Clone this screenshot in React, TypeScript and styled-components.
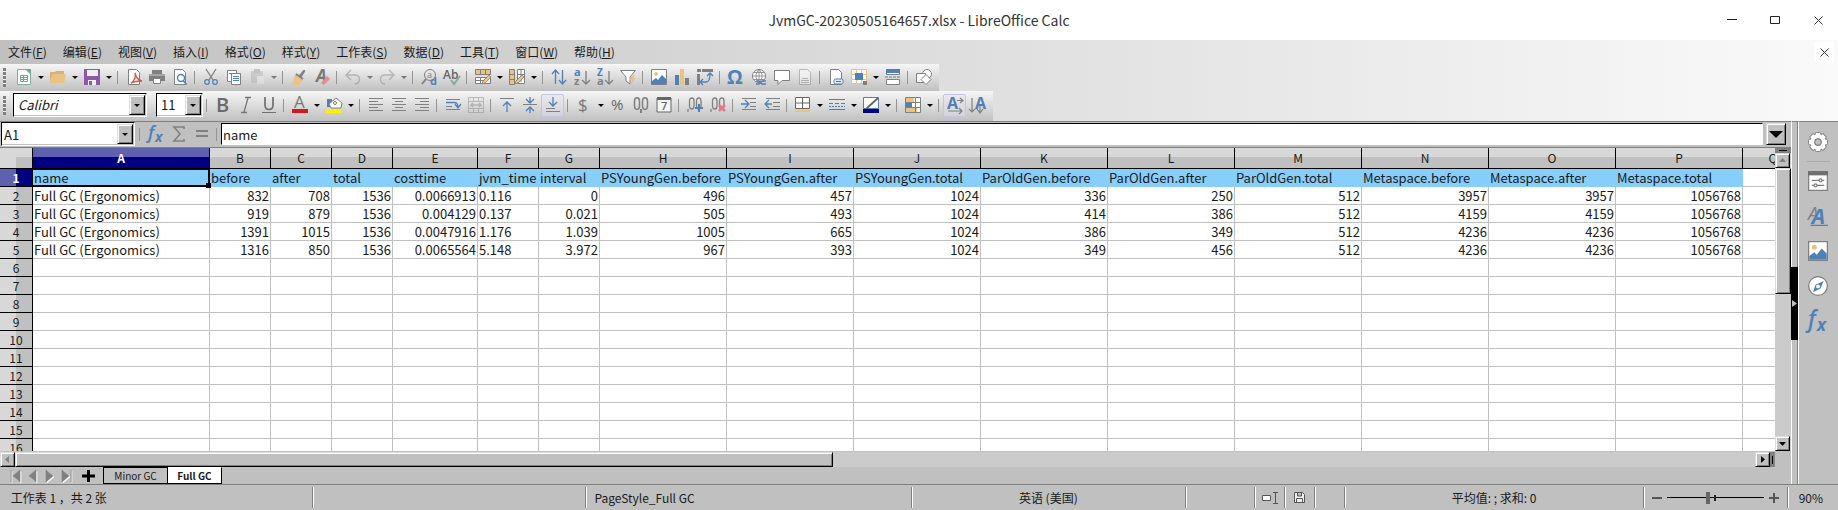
import React from 'react';
import styled, { createGlobalStyle, css } from 'styled-components';

const GREY = '#808080';
const BLUE = '#4d82b8';
const PEACH = '#eac282';
const FONT = '"Noto Sans CJK SC", "Noto Sans", sans-serif';

const Global = createGlobalStyle`
  *, *::before, *::after { box-sizing: border-box; }
  body { margin: 0; background: #c0c0c0; font-family: ${FONT}; color: #1a1a1a; }
  button, input, select { font: inherit; color: inherit; border-radius: 0; }
`;

const raised = css`
  background: #c0c0c0;
  border: 1px solid;
  border-color: #dcdcdc #000 #000 #dcdcdc;
  box-shadow: inset 1px 1px #fff, inset -1px -1px #808080;
`;

/* ---------- window frame ---------- */

const Window = styled.div`
  display: flex;
  flex-direction: column;
  height: 100vh;
  overflow: hidden;
  background: #c0c0c0;
  font-size: 13px;
`;

const TitleBar = styled.header`
  display: grid;
  grid-template-columns: 1fr auto 1fr;
  align-items: center;
  flex: none;
  height: 40px;
  background: #fff;
`;

const Title = styled.h1`
  grid-column: 2;
  margin: 0;
  font-size: 14px;
  line-height: 24px;
  font-weight: 400;
  color: #333;
`;

const WindowButtons = styled.div`
  display: flex;
  justify-content: flex-end;
  gap: 23px;
  padding-right: 10px;
`;

const PlainButton = styled.button`
  display: flex;
  align-items: center;
  justify-content: center;
  width: 20px;
  height: 20px;
  padding: 0;
  border: 0;
  background: transparent;
`;

const Commands = styled.div`
  flex: none;
  background: linear-gradient(90deg, #c0c0c0, #fafafa);
`;

const MenuBar = styled.nav`
  display: flex;
  align-items: center;
  gap: 16px;
  height: 24px;
  padding: 0 4px 0 8px;
`;

const MenuItem = styled.button`
  padding: 0;
  border: 0;
  background: transparent;
  font-size: 12px;
  line-height: 20px;
  white-space: nowrap;
`;

const DocClose = styled(PlainButton)`
  margin-left: auto;
  background: #fff;
`;

const Toolbar = styled.div<{ $tall?: boolean }>`
  display: flex;
  align-items: center;
  width: fit-content;
  height: ${p => (p.$tall ? 30 : 27)}px;
  padding: 0 4px ${p => (p.$tall ? 2 : 1)}px 3px;
  background: linear-gradient(#f6f6f6, #c0c0c0);
`;

const Grip = styled.span`
  width: 3px;
  height: 19px;
  margin-right: 6px;
  background: repeating-linear-gradient(#808080 0 3px, #f0f0f0 3px 4px);
`;

const Separator = styled.span`
  width: 8px;
  height: 13px;
  padding-left: 3px;
  &::before { content: ''; display: block; width: 1px; height: 100%; background: #949494; }
`;

const ToolButton = styled.button<{ $menu?: boolean; $on?: boolean; $dim?: boolean }>`
  display: flex;
  align-items: center;
  gap: 6px;
  width: ${p => (p.$menu ? 34 : 23)}px;
  height: 23px;
  padding: 0 0 0 ${p => (p.$on ? 3 : 4)}px;
  border: ${p => (p.$on ? '1px solid #c4c4e4' : '0')};
  border-radius: 2px;
  background: ${p => (p.$on ? 'rgba(225, 225, 240, 0.4)' : 'transparent')};
  opacity: ${p => (p.$dim ? 0.45 : 1)};
`;

const Svg = styled.svg`
  display: block;
  flex: none;
  overflow: visible;
`;

const Arrow = styled.span`
  border: 3px solid transparent;
  border-top-color: #000;
  border-bottom-width: 0;
`;

/* ---------- combo boxes ---------- */

const Combo = styled.div<{ $kind: 'font' | 'size' | 'name' }>`
  display: flex;
  flex: none;
  width: ${p => ({ font: 134, size: 47, name: 134 })[p.$kind]}px;
  height: 24px;
  padding: 1px;
  background: #fff;
  border: 1px solid;
  border-color: #000 #fff #fff #000;
  box-shadow: inset -1px -1px #c0c0c0;
`;

const Select = styled.select<{ $italic?: boolean }>`
  flex: 1;
  min-width: 0;
  padding: 0 0 0 3px;
  border: 0;
  appearance: none;
  background: transparent;
  font-size: 13px;
  line-height: 20px;
  font-style: ${p => (p.$italic ? 'italic' : 'normal')};
`;

const NameInput = styled.input`
  flex: 1;
  min-width: 0;
  padding: 0 0 0 1px;
  border: 0;
  background: transparent;
  font-size: 13px;
`;

const ComboButton = styled.button`
  display: flex;
  align-items: center;
  justify-content: center;
  flex: none;
  width: 16px;
  padding: 0;
  ${raised}
`;

const FontBoxes = styled.div`
  display: flex;
  gap: 9px;
  padding-left: 1px;
`;

/* ---------- body ---------- */

const Body = styled.div`
  display: flex;
  flex: 1;
  min-height: 0;
`;

const Main = styled.main`
  display: flex;
  flex-direction: column;
  flex: 1;
  min-width: 0;
  border-top: 1px solid #808080;
`;

const FormulaBar = styled.div`
  display: flex;
  align-items: center;
  flex: none;
  height: 26px;
  padding: 0 5px 1px 1px;
  border-bottom: 1px solid #808080;
`;

const FormulaTools = styled.div`
  display: flex;
  align-items: center;
  padding-left: 1px;
`;

const FormulaInput = styled.input`
  flex: 1;
  min-width: 0;
  height: 22px;
  margin: 0 3px 0 0;
  padding: 0 1px;
  border: 1px solid;
  border-color: #000 #fff #fff #000;
  background: #fff;
  font-size: 13px;
`;

const ExpandButton = styled.button`
  display: flex;
  align-items: center;
  justify-content: center;
  width: 20px;
  height: 22px;
  padding: 0;
  ${raised}
`;

const BigArrow = styled.span`
  border: 7px solid transparent;
  border-top-color: #000;
  border-bottom-width: 0;
`;

const SheetArea = styled.div`
  display: grid;
  grid-template-columns: minmax(0, 1fr) 16px;
  grid-template-rows: minmax(0, 1fr) 16px;
  flex: 1;
  min-height: 0;
`;

const Grid = styled.div`
  overflow: hidden;
  background: #fff;
`;

const Table = styled.table`
  width: 100%;
  min-width: 1804px;
  table-layout: fixed;
  border-collapse: separate;
  border-spacing: 0;
  font-size: 13px;
`;

const Col = styled.col<{ $w?: number }>`
  width: ${p => (p.$w ? `${p.$w}px` : 'auto')};
`;

const Corner = styled.td`
  height: 21px;
  padding: 0;
  border-right: 1px solid #000;
  border-bottom: 1px solid #000;
  background: linear-gradient(#c0c0c0, #c0c0c0) right bottom / 16px 11px no-repeat #d8d8d8;
`;

const ColHead = styled.th<{ $sel?: boolean }>`
  height: 21px;
  padding: 0;
  overflow: hidden;
  border-right: 1px solid #000;
  border-bottom: 1px solid #000;
  background: ${p => (p.$sel
    ? 'linear-gradient(#6060b0 0 9px, #000080 9px)'
    : 'linear-gradient(#d8d8d8 0 9px, #c0c0c0 9px)')};
  color: ${p => (p.$sel ? '#fff' : '#1a1a1a')};
  font-size: 12px;
  line-height: 20px;
  font-weight: ${p => (p.$sel ? 700 : 400)};
`;

const RowHead = styled.th<{ $sel?: boolean }>`
  height: 18px;
  padding: 0;
  border-right: 1px solid #000;
  border-bottom: 1px solid #000;
  background: ${p => (p.$sel
    ? 'linear-gradient(90deg, #6060b0 0 16px, #000080 16px)'
    : 'linear-gradient(90deg, #d8d8d8 0 16px, #c0c0c0 16px)')};
  color: ${p => (p.$sel ? '#fff' : '#1a1a1a')};
  font-size: 12px;
  line-height: 17px;
  font-weight: ${p => (p.$sel ? 700 : 400)};
`;

const Cell = styled.td<{ $head?: boolean; $right?: boolean }>`
  position: relative;
  height: 18px;
  padding: 0 1px;
  border-right: 1px solid ${p => (p.$head ? '#87cefa' : '#c0c0c0')};
  border-bottom: 1px solid ${p => (p.$head ? '#87cefa' : '#c0c0c0')};
  background: ${p => (p.$head ? '#87cefa' : '#fff')};
  line-height: 17px;
  text-align: ${p => (p.$right ? 'right' : 'left')};
  white-space: nowrap;
`;

const Cursor = styled.span`
  position: absolute;
  inset: 0 -1px -1px -1px;
  z-index: 1;
  border: 1px solid #000;
  border-right-width: 2px;
  border-bottom-width: 2px;
  &::after {
    content: '';
    position: absolute;
    right: -3px;
    bottom: -3px;
    width: 5px;
    height: 5px;
    background: #000;
  }
`;

/* ---------- scroll bars ---------- */

const VScroll = styled.div`
  display: flex;
  flex-direction: column;
  background: #cbcbcb;
`;

const VSplit = styled.div`
  flex: none;
  height: 5px;
  padding: 2px 4px;
  background: #808080;
  &::before { content: ''; display: block; height: 1px; background: #000; }
`;

const ScrollButton = styled.button`
  display: flex;
  align-items: center;
  justify-content: center;
  flex: none;
  width: 15px;
  height: 15px;
  padding: 0;
  ${raised}
`;

const VTrack = styled.div`
  flex: 1;
  min-height: 0;
`;

const VThumb = styled.div`
  height: 47%;
  ${raised}
`;

const HScroll = styled.div`
  display: flex;
  border-top: 1px solid #c0c0c0;
  background: #cbcbcb;
`;

const HTrack = styled.div`
  flex: 1;
`;

const HThumb = styled.div`
  width: 47%;
  height: 15px;
  ${raised}
`;

const HSplit = styled.div`
  width: 5px;
  padding: 4px 2px;
  background: #808080;
  &::before { content: ''; display: block; width: 1px; height: 8px; background: #000; }
`;

/* ---------- sheet tabs ---------- */

const TabBar = styled.div`
  display: flex;
  flex: none;
  align-items: flex-start;
  height: 17px;
`;

const TabNav = styled.div`
  display: flex;
  align-items: center;
  width: 103px;
  height: 17px;
  padding-left: 7px;
`;

const NavButton = styled(PlainButton)`
  width: 17px;
  height: 16px;
`;

const AddButton = styled(PlainButton)`
  width: 20px;
  height: 16px;
  margin-left: 3px;
`;

const Tab = styled.button<{ $active?: boolean }>`
  width: ${p => (p.$active ? 54 : 65)}px;
  height: 17px;
  padding: 0;
  border: 1px solid #000;
  border-left-width: ${p => (p.$active ? 0 : 1)}px;
  border-top-color: ${p => (p.$active ? '#fff' : '#000')};
  background: ${p => (p.$active ? '#fff' : '#c0c0c0')};
  font-size: 10px;
  line-height: 15px;
  font-weight: ${p => (p.$active ? 700 : 400)};
`;

/* ---------- side bar ---------- */

const Splitter = styled.div`
  display: flex;
  flex-direction: column;
  justify-content: center;
  flex: none;
  width: 7px;
  border-top: 1px solid #808080;
  border-left: 1px solid #fff;
  border-right: 1px solid #808080;
  background: #c0c0c0;
`;

const SplitHandle = styled.button`
  display: flex;
  align-items: center;
  justify-content: center;
  width: 7px;
  height: 73px;
  margin-left: -1px;
  padding: 0;
  border: 0;
  background: #000;
`;

const Sidebar = styled.aside`
  display: flex;
  flex-direction: column;
  align-items: center;
  gap: 15px;
  flex: none;
  width: 40px;
  padding: 10px 1px 0 0;
  border-top: 1px solid #808080;
  border-left: 1px solid #fff;
`;

const SettingsSlot = styled.div`
  display: flex;
  flex-direction: column;
  align-items: center;
  gap: 9px;
  width: 24px;
  height: 24px;
`;

const SideRule = styled.hr`
  flex: none;
  width: 23px;
  height: 1px;
  margin: 0;
  border: 0;
  background: #a8a8a8;
`;

/* ---------- status bar ---------- */

const StatusBar = styled.footer`
  display: flex;
  align-items: center;
  flex: none;
  height: 26px;
  border-top: 1px solid #808080;
  font-size: 12px;
`;

const StatusCell = styled.div<{ $grow?: number; $w?: number; $center?: boolean; $last?: boolean }>`
  display: flex;
  align-items: center;
  justify-content: ${p => (p.$center ? 'center' : 'flex-start')};
  flex: ${p => (p.$grow ? `${p.$grow} 1 0` : `0 0 ${p.$w}px`)};
  min-width: 0;
  height: 21px;
  padding: 0 ${p => (p.$w === 30 ? 0 : 8)}px;
  border-right: ${p => (p.$last ? '0' : '1px solid #808080')};
  box-shadow: ${p => (p.$last ? 'none' : '1px 0 #fff')};
  white-space: nowrap;
`;

const Slider = styled.input`
  flex: 1;
  width: 0;
  min-width: 0;
  height: 12px;
  margin: 0 5px;
  appearance: none;
  background: linear-gradient(#222, #222) 49% 50% / 2px 6px no-repeat,
    linear-gradient(#000, #000) center / 100% 1px no-repeat;
  &::-webkit-slider-thumb {
    appearance: none;
    width: 4px;
    height: 12px;
    background: #666;
  }
`;

/* ---------- drawings ---------- */

const s = { fill: 'none', stroke: GREY, strokeWidth: 1 };
const b = { fill: 'none', stroke: BLUE, strokeWidth: 1.3 };
const sheet = <path d="M2.5.5h8l3 3v12h-11z" fill="#fff" stroke={GREY} />;
const glyph = (x: number, y: number, size: number, text: string, fill: string, weight = 400) => (
  <text x={x} y={y} fontSize={size} fill={fill} fontWeight={weight} fontFamily="Open Sans, sans-serif">{text}</text>
);
const lines = (rows: [number, number, number][], c = GREY) =>
  rows.map(([x, y, w]) => <rect key={y} x={x} y={y} width={w} height={1} fill={c} />);

const icons: Record<string, React.ReactNode> = {
  new: (<><path d="M1.500 .5h9l4 4v11h-13z" fill="#fff" stroke="#7fae9c" /><path d="M9 0h6v6z" fill="#6fa890" /><path d="M4.500 6.500h7v6h-7zM4.500 8.500h7M4.500 10.500h7M7.500 6.500v6" fill="none" stroke="#6fa890" /></>),
  open: (<><path d="M0 13V3h5l1-1h8v3H3z" fill="#d9b27a" /><path d="M3 5h13l-2 9H0z" fill={PEACH} /></>),
  save: (<><path d="M0 0h16v16H0z" fill="#8c5aa8" /><path d="M3 1h11v6H3zM4 11h8v5H4z" fill="#eee" /><path d="M5 12h3v4H5z" fill="#8c5aa8" /></>),
  pdf: (<>{sheet}<path d="M5 14c3-2 5-6 4-10 1 5 3 7 7 8-4 0-7 0-11 2z" fill="none" stroke="#d05a4a" strokeWidth="1.4" /></>),
  print: (<><path d="M3 1h10v4H3z" fill={GREY} /><path d="M0 5h16v7H0z" fill={GREY} /><path d="M4.500 9.500h7v5h-7z" fill="#fff" stroke={GREY} /><path d="M0 6h16" stroke="#ccc" /></>),
  preview: (<>{sheet}<circle cx="9" cy="9" r="3.500" fill="#fff" stroke={BLUE} strokeWidth="1.400" /><path d="M11.500 12l3 3.500" stroke={BLUE} strokeWidth="1.600" /></>),
  cut: (<><path d="M3 0l7 11M13 0L6 11" {...s} strokeWidth="1.300" /><circle cx="4" cy="13" r="2.300" {...b} /><circle cx="12" cy="13" r="2.300" {...b} /></>),
  copy: (<><path d="M1.500 1.500h9v11h-9z" fill="#fff" stroke={GREY} /><path d="M5.500 4.500h9v11h-9z" fill="#fff" stroke={GREY} />{lines([[7, 7, 6], [7, 9, 6], [7, 11, 6], [3, 4, 6]], BLUE)}</>),
  paste: (<><path d="M2 2h12v12H2z" fill="#b0b0b0" /><path d="M5 0h6v4H5z" fill="#999" /><path d="M8 7h7v8H8z" fill="#e8e8e8" /></>),
  brush: (<><path d="M8 7l5-6 1 1-4 6z" fill={GREY} stroke={GREY} /><path d="M4 5l8 6-4 5H1c2-4 2-7 3-11z" fill={PEACH} /><path d="M5 5l7 5" stroke={GREY} strokeWidth="2" /></>),
  clear: (<><g fontStyle="italic">{glyph(2, 13, 17, 'A', '#777', 700)}</g><path d="M7 14l6-7 3 3-6 6z" fill="#e58a9a" /></>),
  undo: (<path d="M6 1L1 6l5 5M1 6h9c6 0 6 8 0 9" {...s} strokeWidth="1.400" />),
  redo: (<path d="M10 1l5 5-5 5M15 6H6c-6 0-6 8 0 9" {...s} strokeWidth="1.400" />),
  find: (<><circle cx="9" cy="6" r="5.500" {...s} />{glyph(6, 9, 9, 'a', GREY)}<path d="M5 10l-4 5" stroke={GREY} strokeWidth="2" />{glyph(9, 16, 11, 'd', BLUE, 700)}</>),
  spell: (<>{glyph(-1, 10, 12, 'Ab', '#666', 600)}<path d="M7 11l3 4 6-8" fill="none" stroke="#7fae9c" strokeWidth="2" /></>),
  row: (<><path d="M.5.500h15v5H.5z" fill={PEACH} stroke={GREY} /><path d="M5.500 1v4M10.500 1v4" {...s} /><path d="M.5 8.500h15v6H.5zM5.500 9v5M0 11.500h10" fill="#fff" stroke={GREY} /><path d="M8 12l6-6 2 2-6 6-3 1z" fill={PEACH} stroke="#777" strokeWidth=".7" /></>),
  col: (<><path d="M.5.500h5v15h-5z" fill={PEACH} stroke={GREY} /><path d="M1 5.500h4M1 10.500h4" {...s} /><path d="M8.500.500h7v14h-7zM9 5.500h6M12 1v12" fill="#fff" stroke={GREY} /><path d="M7 12l6-6 2 2-6 6-3 1z" fill={PEACH} stroke="#777" strokeWidth=".7" /></>),
  sort: (<><path d="M4.500 15V2M1 5l3.500-4L8 5" {...b} /><path d="M11.500 1v13M8 11l3.500 4 3.500-4" {...b} /></>),
  az: (<>{glyph(0, 7, 11, 'a', BLUE, 700)}{glyph(0, 16, 11, 'z', GREY, 700)}<path d="M12 2v13M8 11l4 4 4-4" {...s} strokeWidth="1.300" /></>),
  za: (<>{glyph(0, 7, 10, 'Z', BLUE, 700)}{glyph(0, 16, 11, 'a', GREY, 700)}<path d="M12 2v13M8 11l4 4 4-4" {...s} strokeWidth="1.300" /></>),
  filter: (<><path d="M.5 1.500h15L10 8v7l-4-3V8z" fill="#fff" stroke={GREY} /><path d="M13 6l-4 5h3l-2 5 6-7h-3l2-3z" fill={PEACH} /></>),
  image: (<><path d="M.5.500h15v15H.5z" fill="#fff" stroke={GREY} /><circle cx="5" cy="5" r="2" fill={PEACH} /><path d="M1 15v-3l4-3 2 2 4-5 4 4v5z" fill={BLUE} /></>),
  chart: (<><path d="M1 6h4v10H1z" fill={BLUE} /><path d="M6 0h4v16H6z" fill={PEACH} /><path d="M11 9h4v7h-4z" fill={GREY} /></>),
  pivot: (<><path d="M0 0h4v3H0zM5 0h11v3H5zM0 5h3v11H0z" fill={GREY} /><path d="M4 13h5c3 0 4-3 4-8M6 10l-3 3 3 3M10 7l3-3 3 3" {...b} /></>),
  omega: glyph(-1, 15, 20, 'Ω', BLUE, 700),
  link: (<><circle cx="8" cy="7" r="6.500" fill="#fff" stroke={GREY} /><path d="M8 .5v13M1.500 7h13M3 3.500h10M3 10.500h10M8 .5c-4 4-4 9 0 13M8 .5c4 4 4 9 0 13" {...s} strokeWidth=".8" /><path d="M5 12h3l3 3h4M5 15h3l3-3h4" fill="none" stroke={BLUE} strokeWidth="1.500" /></>),
  comment: <path d="M.5 1.500h15v10H8l-4 4v-4H.5z" fill="#fff" stroke={GREY} />,
  header: (<>{sheet}{lines([[5, 9, 6], [4, 11, 8], [4, 13, 8]])}</>),
  printArea: (<>{sheet}<rect x="6" y="10" width="9" height="5" rx="1.500" fill="#dde8f4" stroke={BLUE} /><path d="M8 12.500h5" stroke={BLUE} /></>),
  freeze: (<><path d="M.5.500h15v14H.5z" fill="#fff" stroke={PEACH} /><path d="M5.500 0v15M10.500 0v15M0 5.500h16M0 10.500h16" stroke={PEACH} /><path d="M12 12h4v4h-4z" fill={GREY} /><path d="M4 4h8v7H4z" fill={BLUE} /></>),
  split: (<><path d="M1.500.500h13v5h-13zM1.500 10.500h13v5h-13z" fill="#fff" stroke={GREY} /><path d="M1 0h14v4H1z" fill={BLUE} /><path d="M0 8h16" stroke={BLUE} strokeDasharray="3 1" /></>),
  shapes: (<><circle cx="11" cy="5" r="4.500" fill="#fff" stroke={GREY} /><path d="M.5 4.500h9v9h-9z" fill="#fff" stroke={GREY} /><path d="M10 5.500l5 5-5 5-5-5z" fill="#fff" stroke={GREY} /></>),
  bold: glyph(1, 15, 20, 'B', '#6a6a6a', 600),
  italic: <path d="M7 .5h6M3 15.500h6M10 1L6 15" fill="none" stroke="#777" strokeWidth="1.300" />,
  underline: (<><path d="M4 0v8c0 6 8 6 8 0V0" fill="none" stroke="#707070" strokeWidth="1.700" /><path d="M1 15.500h14" stroke="#707070" /></>),
  fontColor: (<>{glyph(2, 11, 17, 'A', '#777')}<rect y="12" width="16" height="4" fill="#d01820" /></>),
  fill: (<><path d="M1 2h5v8H1z" fill={BLUE} /><path d="M3 7l7-6 6 5-1 5H5z" fill="#fff" stroke={GREY} /><circle cx="9" cy="6" r="1.500" {...s} /><rect y="12" width="16" height="4" fill="#ffee00" /></>),
  left: lines([[1, 1, 14], [1, 4, 9], [1, 7, 14], [1, 10, 9], [1, 13, 14]]),
  center: lines([[1, 1, 14], [4, 4, 8], [1, 7, 14], [4, 10, 8], [1, 13, 14]]),
  right: lines([[1, 1, 14], [6, 4, 9], [1, 7, 14], [6, 10, 9], [1, 13, 14]]),
  wrap: (<>{lines([[1, 2, 14], [1, 9, 6], [1, 12, 14]])}<path d="M1 5.500h8c3 0 4 1 4 5M10 7l3 4 3-4" {...b} /></>),
  merge: (<><path d="M.5.500h15v4H.5zM.5 11.500h15v4H.5zM5.500 0v4M10.500 0v4M5.500 12v4M10.500 12v4M.5 4v8M15.500 4v8" {...s} /><path d="M3 8h10M5 6L3 8l2 2M11 6l2 2-2 2" {...s} strokeWidth="1.600" /></>),
  top: (<>{lines([[1, 1, 14]])}<path d="M8 15V5M4 9l4-4 4 4" {...b} /></>),
  middle: (<>{lines([[1, 7, 14]])}<path d="M8 0v5M4 2l4 4 4-4M8 16v-5M4 14l4-4 4 4" {...b} /></>),
  bottom: (<>{lines([[1, 11, 9], [1, 14, 14]])}<path d="M8 0v9M4 5l4 4 4-4" {...b} /></>),
  dollar: glyph(2, 14, 17, '$', '#777'),
  percent: glyph(1, 13, 15, '%', '#666'),
  number: (<><path d="M1.500 4c0-4.500 5-4.500 5 0v5c0 4.500-5 4.500-5 0zM9.500 4c0-4.500 5-4.500 5 0v5c0 4.500-5 4.500-5 0z" {...s} strokeWidth="1.500" /><path d="M7 12h2v4H7z" fill={GREY} /></>),
  date: (<><path d="M1 1h14v14H1z" fill="#f4f4f4" stroke="#666" /><path d="M1 0h14v3H1z" fill="#666" />{glyph(5, 13, 11, '7', '#666', 600)}</>),
  addDec: (<><path d="M2.500 4c0-4 4.500-4 4.500 0v5c0 4-4.500 4-4.500 0zM9.500 4c0-4 4.500-4 4.500 0v5c0 4-4.500 4-4.500 0zM1 12v3" {...s} strokeWidth="1.300" /><path d="M12 7v8M8 11h8" stroke={BLUE} strokeWidth="2" /></>),
  delDec: (<><path d="M2.500 4c0-4 4.500-4 4.500 0v5c0 4-4.500 4-4.500 0zM9.500 4c0-4 4.500-4 4.500 0v5c0 4-4.500 4-4.500 0zM1 12v3" {...s} strokeWidth="1.300" /><path d="M9 8l6 6M15 8l-6 6" stroke="#e5788a" strokeWidth="2.500" /></>),
  indent: (<>{lines([[1, 1, 14], [9, 5, 6], [9, 9, 6], [1, 12, 14]])}<path d="M0 7h7M4 3l4 4-4 4" {...b} /></>),
  outdent: (<>{lines([[2, 1, 14], [9, 5, 7], [9, 9, 7], [2, 12, 14]])}<path d="M8 7H1M5 3L1 7l4 4" {...b} /></>),
  border: (<><path d="M.5.500h14v11H.5zM7.500 0v12M0 6h15" fill="#fff" stroke="#666" /><rect y="13" width="15" height="2" fill={PEACH} /></>),
  lineStyle: (<>{lines([[0, 2, 16], [0, 12, 16]], BLUE)}<path d="M0 6.500h16" stroke={BLUE} strokeDasharray="4 2" /><path d="M0 9.500h16" stroke={BLUE} strokeDasharray="2 1" /></>),
  lineColor: (<><path d="M.5.500h15v11H.5z" fill="#fff" stroke={BLUE} /><path d="M3 12L15 1" stroke="#666" strokeWidth="1.800" /><rect y="12" width="16" height="4" fill="#000080" /></>),
  cond: (<><path d="M.5.500h15v15H.5z" fill="#fff" stroke={GREY} /><path d="M1 1h8v4H1zM1 11h11v4H1z" fill={PEACH} /><path d="M1 6h6v4H1z" fill={BLUE} /><path d="M0 5.500h16M0 10.500h16M10.500 0v16" {...s} /></>),
  ltr: (<>{glyph(0, 12, 16, 'A', BLUE, 700)}<path d="M10 3.500h6M13 1l3 2.500L13 6M1 14h14M12 11l3 3-3 3" {...s} strokeWidth="1.200" /></>),
  ttb: (<>{glyph(5, 12, 16, 'A', BLUE, 700)}<path d="M2 1v14M-1 12l3 3 3-3M10 9v7M7 12l3 4 3-4" {...s} strokeWidth="1.200" /></>),
  fx: (<g fontStyle="italic">{glyph(0, 13, 18, 'f', BLUE, 600)}{glyph(7, 16, 14, 'x', BLUE, 700)}</g>),
  sum: <path d="M13 3V1H3l6 7-6 7h10v-2" fill="none" stroke={GREY} strokeWidth="1.600" />,
  equals: <path d="M2 5h12M2 10h12" stroke={GREY} strokeWidth="2" />,
  gear: (
    <>
      {[0, 45, 90, 135].map(a => (
        <rect key={a} x="5.800" y=".4" width="4.400" height="15.200" rx="1" fill="#fff" stroke={GREY} strokeWidth=".8" transform={`rotate(${a} 8 8)`} />
      ))}
      <circle cx="8" cy="8" r="6.200" fill="#fff" />
      <circle cx="8" cy="8" r="2.600" fill="#c0c0c0" stroke={GREY} />
    </>
  ),
  props: (<><path d="M.5.500h15v15H.5z" fill="#fff" stroke={GREY} /><path d="M0 0h16v3.500H0z" fill="#707070" /><path d="M3 7.500h10M3 11.500h10" {...s} /><circle cx="10" cy="7.500" r="1.200" fill="#fff" stroke={GREY} /><circle cx="6" cy="11.500" r="1.200" fill="#fff" stroke={GREY} /></>),
  styles: (<><g fontStyle="italic">{glyph(0, 11, 15, 'A', GREY)}{glyph(3, 14, 17, 'A', BLUE, 700)}</g><path d="M2 15.500h14" stroke={BLUE} /></>),
  compass: (<><circle cx="8" cy="8" r="7.500" fill="#fff" stroke={GREY} /><path d="M12.500 4L10 10l-6 3 2-6z" fill={BLUE} /><circle cx="8" cy="8.300" r="1.500" fill="#fff" /></>),
};

const Icon = ({ name, size = 16 }: { name: string; size?: number }) => (
  <Svg width={size} height={size} viewBox="0 0 16 16" aria-hidden="true">{icons[name]}</Svg>
);

/* Entries: '|' is a separator, '+' opens a menu, '*' is switched on, '~' is unavailable. */
const standardTools = 'new+ open+ save+ | pdf print preview | cut copy paste+~ | brush clear | undo+~ redo+~ | find spell | row+ col+ | sort az za filter | image chart pivot | omega link comment header~ | printArea freeze+ split | shapes'.split(' ');
const formatTools = '| bold italic underline | fontColor+ fill+ | left center right | wrap merge~ | top middle bottom* | dollar+ percent number date | addDec delDec | indent outdent | border+ lineStyle+ lineColor+ | cond+ | ltr* ttb'.split(' ');

const Tools = ({ items }: { items: string[] }) => (
  <>
    {items.map((item, i) => {
      if (item === '|') return <Separator key={i} />;
      const name = item.replace(/[+*~]/g, '');
      const menu = item.includes('+');
      return (
        <ToolButton key={i} aria-label={name} $menu={menu} $on={item.includes('*')} $dim={item.includes('~')}>
          <Icon name={name} />
          {menu && <Arrow />}
        </ToolButton>
      );
    })}
  </>
);

const Cross = () => (
  <Svg width="9" height="9" viewBox="0 0 9 9"><path d="M.5.500l8 8M8.500.500l-8 8" stroke="#333" fill="none" /></Svg>
);

const menus: [string, string][] = [
  ['文件', 'F'], ['编辑', 'E'], ['视图', 'V'], ['插入', 'I'], ['格式', 'O'], ['样式', 'Y'],
  ['工作表', 'S'], ['数据', 'D'], ['工具', 'T'], ['窗口', 'W'], ['帮助', 'H'],
];

const columns: [string, number?][] = [
  ['A', 177], ['B', 61], ['C', 61], ['D', 61], ['E', 85], ['F', 61], ['G', 61], ['H', 127], ['I', 127],
  ['J', 127], ['K', 127], ['L', 127], ['M', 127], ['N', 127], ['O', 127], ['P', 127], ['Q'],
];

const rows: string[][] = [
  ['name', 'before', 'after', 'total', 'costtime', 'jvm_time', 'interval', 'PSYoungGen.before', 'PSYoungGen.after', 'PSYoungGen.total', 'ParOldGen.before', 'ParOldGen.after', 'ParOldGen.total', 'Metaspace.before', 'Metaspace.after', 'Metaspace.total'],
  ['Full GC (Ergonomics)', '832', '708', '1536', '0.0066913', '0.116', '0', '496', '457', '1024', '336', '250', '512', '3957', '3957', '1056768'],
  ['Full GC (Ergonomics)', '919', '879', '1536', '0.004129', '0.137', '0.021', '505', '493', '1024', '414', '386', '512', '4159', '4159', '1056768'],
  ['Full GC (Ergonomics)', '1391', '1015', '1536', '0.0047916', '1.176', '1.039', '1005', '665', '1024', '386', '349', '512', '4236', '4236', '1056768'],
  ['Full GC (Ergonomics)', '1316', '850', '1536', '0.0065564', '5.148', '3.972', '967', '393', '1024', '349', '456', '512', '4236', '4236', '1056768'],
];

const isNumeric = (row: number, col: number) => row > 0 && col !== 0 && col !== 5;

const Spreadsheet = () => (
  <Table>
    <colgroup>
      <Col $w={33} />
      {columns.map(([name, w]) => <Col key={name} $w={w} />)}
    </colgroup>
    <thead>
      <tr>
        <Corner />
        {columns.map(([name], c) => <ColHead key={name} scope="col" $sel={c === 0}>{name}</ColHead>)}
      </tr>
    </thead>
    <tbody>
      {Array.from({ length: 16 }, (_, r) => (
        <tr key={r}>
          <RowHead scope="row" $sel={r === 0}>{r + 1}</RowHead>
          {columns.map(([name], c) => (
            <Cell key={name} $head={r === 0 && c < 16} $right={isNumeric(r, c)}>
              {rows[r]?.[c]}
              {r === 0 && c === 0 && <Cursor />}
            </Cell>
          ))}
        </tr>
      ))}
    </tbody>
  </Table>
);

const Tri = ({ d, fill = '#000', size = 7 }: { d: string; fill?: string; size?: number }) => (
  <Svg width={size} height={size} viewBox="0 0 7 7"><path d={d} fill={fill} /></Svg>
);

const navShapes = ['M0 0v12M9 0v12L2 6z', 'M8 0v12L1 6z', 'M1 0v12l7-6z', 'M0 0v12l7-6zM9 0v12'];

export default function App() {
  return (
    <Window>
      <Global />
      <TitleBar>
        <Title>JvmGC-20230505164657.xlsx - LibreOffice Calc</Title>
        <WindowButtons>
          <PlainButton aria-label="minimize"><Svg width="10" height="10"><path d="M0 4.500h10" stroke="#222" /></Svg></PlainButton>
          <PlainButton aria-label="maximize"><Svg width="10" height="8"><path d="M.5.500h9v7h-9z" fill="none" stroke="#222" /></Svg></PlainButton>
          <PlainButton aria-label="close"><Cross /></PlainButton>
        </WindowButtons>
      </TitleBar>

      <Commands>
        <MenuBar>
          {menus.map(([label, key]) => <MenuItem key={key}>{label}(<u>{key}</u>)</MenuItem>)}
          <DocClose aria-label="close document"><Cross /></DocClose>
        </MenuBar>
        <Toolbar>
          <Grip />
          <Tools items={standardTools} />
        </Toolbar>
        <Toolbar $tall>
          <Grip />
          <FontBoxes>
            <Combo $kind="font">
              <Select $italic aria-label="font name"><option>Calibri</option></Select>
              <ComboButton aria-label="open font list" tabIndex={-1}><Arrow /></ComboButton>
            </Combo>
            <Combo $kind="size">
              <Select aria-label="font size"><option>11</option></Select>
              <ComboButton aria-label="open size list" tabIndex={-1}><Arrow /></ComboButton>
            </Combo>
          </FontBoxes>
          <Tools items={formatTools} />
        </Toolbar>
      </Commands>

      <Body>
        <Main>
          <FormulaBar>
            <Combo $kind="name">
              <NameInput aria-label="name box" defaultValue="A1" />
              <ComboButton aria-label="open names"><Arrow /></ComboButton>
            </Combo>
            <FormulaTools>
              <Tools items={['|', 'fx', 'sum', 'equals', '|']} />
            </FormulaTools>
            <FormulaInput aria-label="formula" defaultValue="name" />
            <ExpandButton aria-label="expand formula bar"><BigArrow /></ExpandButton>
          </FormulaBar>

          <SheetArea>
            <Grid><Spreadsheet /></Grid>
            <VScroll>
              <VSplit />
              <ScrollButton aria-label="up"><Tri d="M0 5h7L3.500 1z" fill={GREY} /></ScrollButton>
              <VTrack><VThumb /></VTrack>
              <ScrollButton aria-label="down"><Tri d="M0 2h7L3.500 6z" /></ScrollButton>
            </VScroll>
            <HScroll>
              <ScrollButton aria-label="scroll left"><Tri d="M5 0v7L1 3.500z" fill={GREY} /></ScrollButton>
              <HTrack><HThumb /></HTrack>
              <ScrollButton aria-label="scroll right"><Tri d="M2 0v7l4-3.500z" /></ScrollButton>
              <HSplit />
            </HScroll>
          </SheetArea>

          <TabBar>
            <TabNav>
              {navShapes.map((d, i) => (
                <NavButton key={i} aria-label={`sheet navigation ${i + 1}`}>
                  <Svg width="9" height="12" viewBox="0 0 9 12"><path d={d} transform="translate(1 1)" fill="#fff" stroke="#fff" strokeWidth=".6" /><path d={d} fill={GREY} stroke={GREY} strokeWidth=".6" /></Svg>
                </NavButton>
              ))}
              <AddButton aria-label="add sheet"><Svg width="13" height="12" viewBox="0 0 13 12"><path d="M0 6h13M6.500 0v12" stroke="#000" strokeWidth="3" /></Svg></AddButton>
            </TabNav>
            <Tab>Minor GC</Tab>
            <Tab $active>Full GC</Tab>
          </TabBar>
        </Main>

        <Splitter>
          <SplitHandle aria-label="hide side bar"><Tri d="M1 0v7l5-3.500z" fill="#c0c0c0" /></SplitHandle>
        </Splitter>

        <Sidebar>
          <SettingsSlot>
            <PlainButton aria-label="settings"><Icon name="gear" size={20} /></PlainButton>
            <SideRule />
          </SettingsSlot>
          {['props', 'styles', 'image', 'compass', 'fx'].map(n => (
            <PlainButton key={n} aria-label={n}><Icon name={n} size={20} /></PlainButton>
          ))}
        </Sidebar>
      </Body>

      <StatusBar>
        <StatusCell $grow={314}>&nbsp;工作表 1 ，共 2 张</StatusCell>
        <StatusCell $grow={272} />
        <StatusCell $grow={327}>PageStyle_Full GC</StatusCell>
        <StatusCell $grow={273} $center>英语 (美国)</StatusCell>
        <StatusCell $w={69} />
        <StatusCell $w={30} $center><Svg width="16" height="12"><path d="M.5 3.500h8v5h-8z" fill="#fff" stroke="#555" /><path d="M11 .5h5M11 11.500h5M13.500 0v12" stroke="#555" /></Svg></StatusCell>
        <StatusCell $w={30} $center><Svg width="11" height="11"><path d="M.5.500h8l2 2v8H.5zM3.500 1v3h4V1M2.500 10V6.500h6V10" fill="#eee" stroke="#555" /></Svg></StatusCell>
        <StatusCell $w={30} />
        <StatusCell $w={299} $center>平均值: ; 求和: 0</StatusCell>
        <StatusCell $w={144}>
          <Svg width="10" height="10"><path d="M0 5h10" stroke="#555" strokeWidth="2" /></Svg>
          <Slider type="range" aria-label="zoom" min={0} max={100} defaultValue={42} />
          <Svg width="10" height="10"><path d="M0 5h10M5 0v10" stroke="#555" strokeWidth="2" /></Svg>
        </StatusCell>
        <StatusCell $w={50} $last>&nbsp;90%</StatusCell>
      </StatusBar>
    </Window>
  );
}
